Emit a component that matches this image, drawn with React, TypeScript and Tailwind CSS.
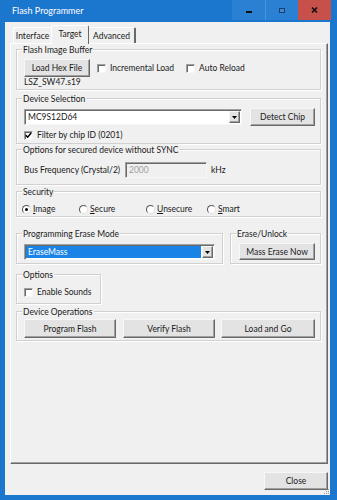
import React from "react";

// Flash Programmer – Target tab (Windows classic dialog look)

const raised =
  "border border-t-[#f7f7f7] border-l-[#f7f7f7] border-r-[#696969] border-b-[#696969] shadow-[inset_-1px_-1px_0_#a0a0a0]";
const sunken =
  "border border-t-[#a0a0a0] border-l-[#a0a0a0] border-r-[#f7f7f7] border-b-[#f7f7f7] shadow-[inset_1px_1px_0_#696969]";

type BoxProps = { className?: string; children?: React.ReactNode };

const Btn = ({ className = "", children }: BoxProps) => (
  <div className={`flex items-center justify-center bg-[#e3e3e3] ${raised} ${className}`}>
    {children}
  </div>
);

const Group = ({ title, className = "", children }: BoxProps & { title: string }) => (
  <div className={`border border-[#d0d0d0] shadow-[inset_1px_1px_0_#ffffff,1px_1px_0_#ffffff] ${className}`}>
    <div className="-mt-[6px] ml-[5px] w-fit bg-[#f0f0f0] px-[1px] leading-[12px]">{title}</div>
    {children}
  </div>
);

const Check = ({ label, checked, className = "" }: { label: string; checked?: boolean; className?: string }) => (
  <div className={`flex items-center ${className}`}>
    <span className={`w-[9px] h-[9px] bg-white flex items-center justify-center ${sunken}`}>
      {checked && (
        <svg width="7" height="7" viewBox="0 0 7 7">
          <path d="M0.8 3.2 L2.6 5.2 L6.2 1" stroke="#000" strokeWidth="1.5" fill="none" />
        </svg>
      )}
    </span>
    <span className="ml-[4px]">{label}</span>
  </div>
);

const Radio = ({ first, rest, checked, className = "" }: { first: string; rest: string; checked?: boolean; className?: string }) => (
  <div className={`flex items-center ${className}`}>
    <span className="w-[9px] h-[9px] rounded-full bg-white border border-t-[#555555] border-l-[#555555] border-r-[#e0e0e0] border-b-[#e0e0e0] flex items-center justify-center">
      {checked && <span className="w-[3px] h-[3px] rounded-full bg-black" />}
    </span>
    <span className="ml-[2px]">
      <span className="underline">{first}</span>
      {rest}
    </span>
  </div>
);

const Arrow = () => (
  <div className={`w-[11px] bg-[#e3e3e3] flex items-center justify-center ${raised}`}>
    <svg width="5" height="3" viewBox="0 0 5 3">
      <path d="M0 0 H5 L2.5 3 Z" fill="#000" />
    </svg>
  </div>
);

const Combo = ({ value, selected, className = "" }: { value: string; selected?: boolean; className?: string }) => (
  <div className={`flex bg-white p-[1px] ${sunken} ${className}`}>
    <div
      className={
        selected
          ? "flex-1 flex items-center pl-[2px] bg-[#1a84e6] text-white mr-[1px]"
          : "flex-1 flex items-center pl-[2px]"
      }
    >
      {value}
    </div>
    <Arrow />
  </div>
);

const TitleBtn = ({ className = "", children }: BoxProps) => (
  <div className={`w-[33px] h-[20px] flex items-center justify-center ${className}`}>{children}</div>
);

export default function App() {
  return (
    <div className="w-[337px] h-[500px] bg-[#1b76ce] flex flex-col font-['Lato',sans-serif] text-[8.5px] leading-[12px] text-[#1a1a1a] whitespace-nowrap select-none">
      {/* title bar */}
      <div className="h-[22px] flex shrink-0 pr-[6px]">
        <div className="flex-1 pl-[12px] pt-[5px] text-white text-[9px]">Flash Programmer</div>
        <TitleBtn className="bg-[#2a80d2]">
          <span className="w-[6px] h-[2px] bg-[#111] mt-[3px]" />
        </TitleBtn>
        <TitleBtn className="bg-[#2a80d2] border-l border-[#4a94dc]">
          <span className="w-[6px] h-[5px] border border-[#1d3d66] bg-[#3b8ad6]" />
        </TitleBtn>
        <TitleBtn className="bg-[#c7504a]">
          <svg width="7" height="6" viewBox="0 0 7 6">
            <path d="M1 0.5 L6 5.5 M6 0.5 L1 5.5" stroke="#111" strokeWidth="1.6" />
          </svg>
        </TitleBtn>
      </div>

      {/* client area */}
      <div className="relative flex-1 ml-[5px] mr-[7px] mb-[5px] bg-[#f0f0f0] flex flex-col">
        <div className="ml-[5px] mr-[2px] mt-[3px] flex flex-col">
          {/* tabs */}
          <div className="h-[18px] flex items-end">
            <div className="ml-[3px] w-[38px] h-[16px] flex items-center justify-center border-t border-l border-white rounded-tl-[2px]">
              Interface
            </div>
            <div className="relative z-10 w-[38px] h-[19px] -mb-[1px] bg-[#f0f0f0] flex items-start justify-center pt-[2px] border-t border-l border-white border-r border-r-[#696969] rounded-t-[2px]">
              Target
            </div>
            <div className="w-[47px] h-[16px] flex items-center justify-center border-t border-white border-r-2 border-r-[#696969] rounded-tr-[2px]">
              Advanced
            </div>
          </div>

          {/* panel */}
          <div className="h-[421px] border border-t-white border-l-white border-r-[#696969] border-b-[#696969] shadow-[inset_-1px_-1px_0_#a0a0a0] pl-[5px] flex flex-col">
            <Group title="Flash Image Buffer" className="mt-[5px] w-[305px] h-[41px]">
              <div className="mt-[3px] ml-[7px] flex items-center h-[18px]">
                <Btn className="w-[66px] h-[18px]">Load Hex File</Btn>
                <Check label="Incremental Load" className="ml-[7px] w-[89px]" />
                <Check label="Auto Reload" />
              </div>
              <div className="ml-[7px] leading-[10px]">LSZ_SW47.s19</div>
            </Group>

            <Group title="Device Selection" className="mt-[8px] w-[305px] h-[46px]">
              <div className="mt-[3px] ml-[7px] flex items-center h-[18px]">
                <Combo value="MC9S12D64" className="w-[218px] h-[16px]" />
                <Btn className="ml-[8px] w-[65px] h-[18px]">Detect Chip</Btn>
              </div>
              <Check label="Filter by chip ID (0201)" checked className="mt-[3px] ml-[7px]" />
            </Group>

            <Group title="Options for secured device without SYNC" className="mt-[5px] w-[305px] h-[36px]">
              <div className="mt-[6px] ml-[7px] flex items-center h-[16px]">
                <div className="w-[101px]">Bus Frequency (Crystal/2)</div>
                <div className={`w-[82px] h-[16px] flex items-center pl-[3px] text-[#a0a0a0] bg-[#f0f0f0] ${sunken}`}>
                  2000
                </div>
                <div className="ml-[4px]">kHz</div>
              </div>
            </Group>

            <Group title="Security" className="mt-[6px] w-[305px] h-[26px]">
              <div className="mt-[5px] ml-[5px] flex items-center">
                <Radio first="I" rest="mage" checked className="w-[57px]" />
                <Radio first="S" rest="ecure" className="w-[67px]" />
                <Radio first="U" rest="nsecure" className="w-[61px]" />
                <Radio first="S" rest="mart" />
              </div>
            </Group>

            <div className="mt-[16px] flex gap-[7px]">
              <Group title="Programming Erase Mode" className="w-[207px] h-[31px]">
                <Combo value="EraseMass" selected className="mt-[4px] ml-[7px] w-[191px] h-[16px]" />
              </Group>
              <Group title="Erase/Unlock" className="w-[91px] h-[31px]">
                <Btn className="mt-[3px] ml-[8px] w-[76px] h-[17px]">Mass Erase Now</Btn>
              </Group>
            </div>

            <Group title="Options" className="mt-[10px] w-[85px] h-[30px]">
              <Check label="Enable Sounds" className="mt-[5px] ml-[7px]" />
            </Group>

            <Group title="Device Operations" className="mt-[7px] w-[305px] h-[30px]">
              <div className="mt-[1px] ml-[7px] flex">
                <Btn className="w-[92px] h-[19px]">Program Flash</Btn>
                <Btn className="ml-[7px] w-[92px] h-[19px]">Verify Flash</Btn>
                <Btn className="ml-[6px] w-[94px] h-[19px]">Load and Go</Btn>
              </div>
            </Group>
          </div>
        </div>

        <div className="mt-[8px] flex justify-end">
          <Btn className="mr-[2px] w-[64px] h-[18px]">Close</Btn>
        </div>

        {/* size grip */}
        <svg className="absolute right-0 bottom-0" width="8" height="8" viewBox="0 0 8 8">
          {[
            [6, 2],
            [4, 4],
            [6, 4],
            [2, 6],
            [4, 6],
            [6, 6],
          ].map(([x, y]) => (
            <rect key={`${x}-${y}`} x={x} y={y} width="1" height="1" fill="#9a9a9a" />
          ))}
        </svg>
      </div>
    </div>
  );
}
